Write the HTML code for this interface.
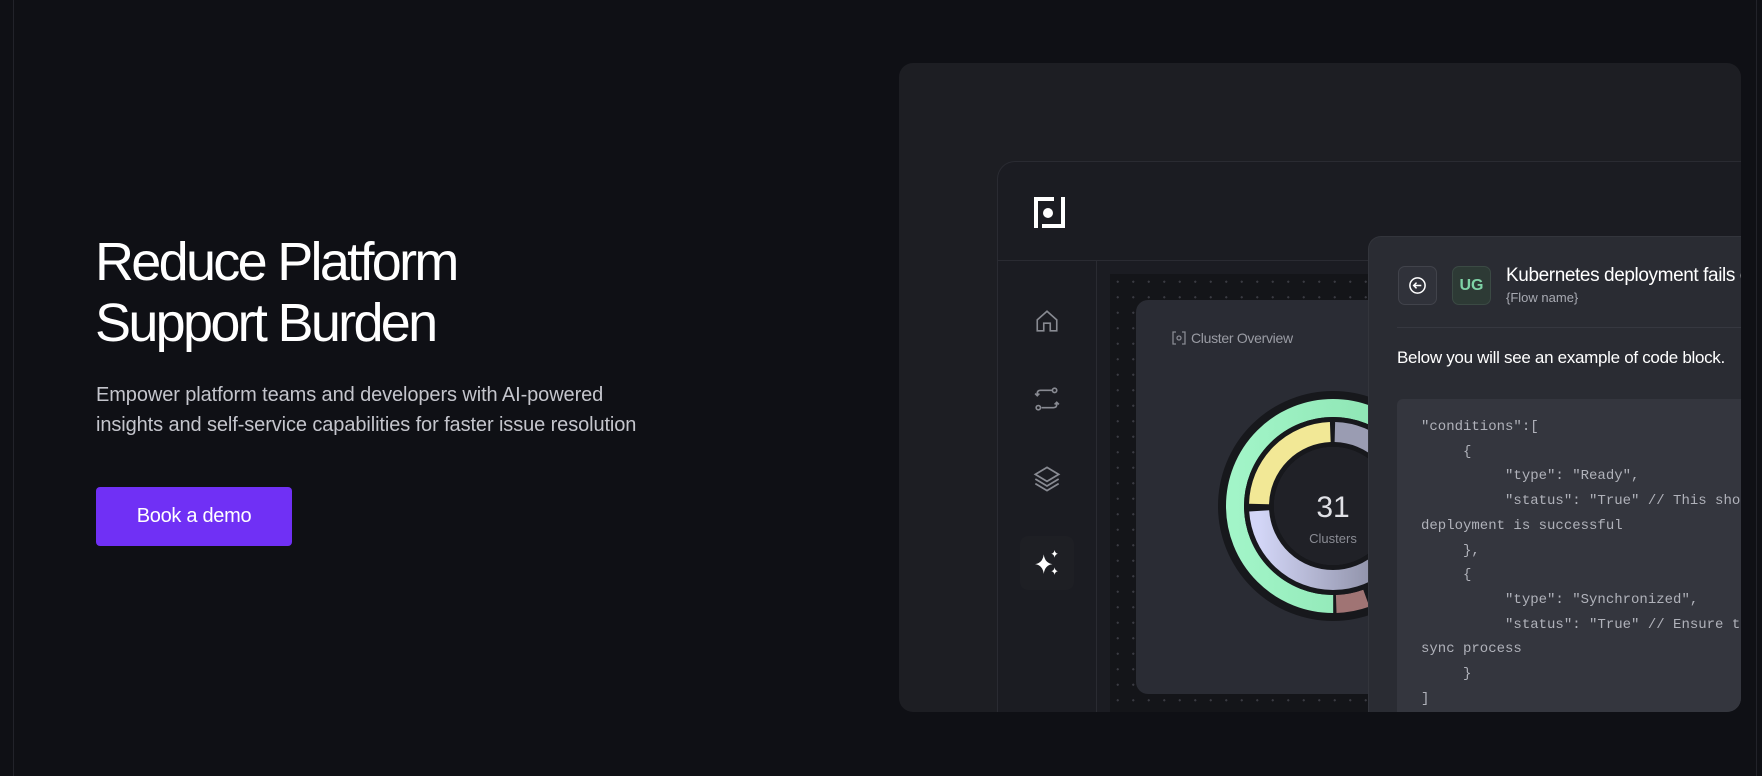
<!DOCTYPE html>
<html><head><meta charset="utf-8"><style>
*{margin:0;padding:0;box-sizing:border-box}
html,body{width:1762px;height:776px;overflow:hidden}
body{background:#0f1015;position:relative;font-family:"Liberation Sans",sans-serif}
.vl{position:absolute;top:0;bottom:0;width:1px;background:#22232a}
h1{position:absolute;left:95px;top:232px;font-size:54px;font-weight:normal;line-height:61px;color:#fff;letter-spacing:-2.7px}
.p{position:absolute;left:96px;top:380px;font-size:20px;line-height:30px;color:#c4c5cc;letter-spacing:-0.1px;white-space:nowrap}
.btn{position:absolute;left:96px;top:487px;width:196px;height:59px;background:#7030f5;border-radius:4px;color:#fff;font-size:20px;line-height:59px;text-align:center;letter-spacing:-0.3px}
.card{position:absolute;left:899px;top:63px;width:842px;height:649px;background:#1d1e23;border-radius:14px;overflow:hidden}
.app{position:absolute;left:98px;top:98px;width:900px;height:551px;background:#1b1c22;border:1px solid #2a2b32;border-bottom:none;border-radius:18px 18px 0 0;overflow:hidden}
.hdiv{position:absolute;left:0;right:0;top:98px;height:1px;background:#2a2b32}
.vdiv{position:absolute;left:98px;top:98px;bottom:0;width:1px;background:#2a2b32}
.dots{position:absolute;left:112px;top:112px;width:700px;height:440px;background-image:radial-gradient(#3a3b42 1px,transparent 1.2px);background-size:15.5px 15.5px;background-color:#141519}
.cl{position:absolute;left:138px;top:138px;width:300px;height:394px;background:#2a2c34;border-radius:12px}
.chat{position:absolute;left:370px;top:74px;width:500px;height:477px;background:#2a2c33;border-radius:13px 13px 0 0;border:1px solid #33353c;border-bottom:none;overflow:hidden}
.code{font-family:"Liberation Mono",monospace;font-size:14px;line-height:24.7px;color:#b0b2ba;white-space:pre;position:absolute;left:28px;top:162px;width:400px;height:315px;overflow:hidden;background:#34363e;border-radius:6px 6px 0 0;padding:16px 0 0 24px}
</style></head><body>
<div class="vl" style="left:13px"></div><div class="vl" style="left:1756px"></div>
<h1>Reduce Platform<br>Support Burden</h1>
<div class="p">Empower platform teams and developers with AI-powered<br>insights and self-service capabilities for faster issue resolution</div>
<div class="btn">Book a demo</div>
<div class="card">
 <div class="app">
  <svg style="position:absolute;left:36px;top:35px" width="31" height="31" viewBox="0 0 31 31"><path d="M0 0H20V4H4V31H0Z M27 0H31V31H8V27H27Z" fill="#fff"/><circle cx="14" cy="16" r="5" fill="#fff"/></svg>
  <div class="hdiv"></div><div class="vdiv"></div>
  <div class="dots"></div>
  <svg style="position:absolute;left:36px;top:146px" width="26" height="26" viewBox="0 0 24 24" fill="none" stroke="#888a92" stroke-width="1.5"><path d="M3 11L12 3L21 11V21H15V14H9V21H3Z"/></svg>
  <svg style="position:absolute;left:36px;top:224px" width="26" height="26" viewBox="0 0 24 24" fill="none" stroke="#888a92" stroke-width="1.5"><circle cx="19" cy="4" r="2"/><circle cx="4" cy="20" r="2"/><path d="M17 4H6Q3 4 3 7V9M1 7L3 9L5 7M7 20H18Q21 20 21 17V15M19 17L21 15L23 17"/></svg>
  <svg style="position:absolute;left:35px;top:303px" width="28" height="28" viewBox="0 0 24 24" fill="none" stroke="#888a92" stroke-width="1.5"><path d="M12 2L22 8L12 14L2 8Z M2 12L12 18L22 12 M2 16L12 22L22 16"/></svg>
  <div style="position:absolute;left:22px;top:374px;width:54px;height:54px;background:#1e1f24;border-radius:8px"></div>
  <svg style="position:absolute;left:36px;top:388px" width="26" height="26" viewBox="0 0 24 24" fill="#fff"><path d="M9 4Q10 12 17 13Q10 14 9 22Q8 14 1 13Q8 12 9 4Z M19 0Q19.5 3 22 3.5Q19.5 4 19 7Q18.5 4 16 3.5Q18.5 3 19 0Z M19 16Q19.5 19 22 19.5Q19.5 20 19 23Q18.5 20 16 19.5Q18.5 19 19 16Z"/></svg>
  <div class="cl">
   <svg style="position:absolute;left:36px;top:31px" width="14" height="14" viewBox="0 0 14 14" fill="none" stroke="#888a92" stroke-width="1.3"><path d="M4 1H1V13H4M10 1H13V13H10"/><circle cx="7" cy="7" r="2"/></svg>
   <div style="position:absolute;left:55px;top:30px;color:#9a9ca4;font-size:14px;letter-spacing:-0.3px">Cluster Overview</div>
   <svg style="position:absolute;left:0;top:0" width="300" height="394">
    <defs><linearGradient id="g" x1="0" y1="0" x2="1" y2="0"><stop offset="0" stop-color="#a2f5c8"/><stop offset="0.7" stop-color="#8fe6b5"/><stop offset="1" stop-color="#5c9479"/></linearGradient>
    <linearGradient id="lv" x1="0" y1="0" x2="1" y2="0"><stop offset="0" stop-color="#d3d6f7"/><stop offset="1" stop-color="#7c7e92"/></linearGradient></defs>
    <circle cx="197" cy="206" r="100" fill="none" stroke="#17181c" stroke-width="30"/>
    <circle cx="197" cy="206" r="98" fill="none" stroke="url(#g)" stroke-width="18" pathLength="100" stroke-dasharray="75 25" stroke-dashoffset="-25"/>
    <circle cx="197" cy="206" r="98" fill="none" stroke="#a07474" stroke-width="18" pathLength="100" stroke-dasharray="5 95" stroke-dashoffset="-19.5"/>
    <circle cx="197" cy="206" r="74" fill="none" stroke="#17181c" stroke-width="30"/>
    <circle cx="197" cy="206" r="74" fill="none" stroke="#f2e896" stroke-width="20" pathLength="100" stroke-dasharray="24 76" stroke-dashoffset="-50.5"/>
    <circle cx="197" cy="206" r="74" fill="none" stroke="url(#lv)" stroke-width="20" pathLength="100" stroke-dasharray="49 51" stroke-dashoffset="0"/>
    <circle cx="197" cy="206" r="74" fill="none" stroke="#9a9cb2" stroke-width="20" pathLength="100" stroke-dasharray="24 76" stroke-dashoffset="-75.5"/>
    <circle cx="197" cy="206" r="59" fill="#202127"/>
    <text x="197" y="217" fill="#e0e1e6" font-size="30" text-anchor="middle" font-family="Liberation Sans">31</text>
    <text x="197" y="243" fill="#8a8c94" font-size="13" text-anchor="middle" font-family="Liberation Sans">Clusters</text>
   </svg>
  </div>
  <div class="chat">
   <div style="position:absolute;left:29px;top:29px;width:39px;height:39px;border:1px solid #41434b;background:#30323a;border-radius:7px"></div>
   <svg style="position:absolute;left:39px;top:39px" width="19" height="19" viewBox="0 0 20 20" fill="none" stroke="#fff" stroke-width="1.6"><circle cx="10" cy="10" r="8"/><path d="M14 10H6M9 7L6 10L9 13"/></svg>
   <div style="position:absolute;left:83px;top:29px;width:39px;height:39px;border:1px solid #3b4a44;background:#2d3a35;border-radius:7px;color:#7fd3a6;font-weight:bold;font-size:16px;line-height:37px;text-align:center">UG</div>
   <div style="position:absolute;left:137px;top:28px;color:#fff;font-size:19px;white-space:nowrap;letter-spacing:-0.4px">Kubernetes deployment fails on</div>
   <div style="position:absolute;left:137px;top:53px;color:#a8aab2;font-size:13px">{Flow name}</div>
   <div style="position:absolute;left:28px;top:90px;width:480px;height:1px;background:#363840"></div>
   <div style="position:absolute;left:28px;top:111px;color:#fff;font-size:17px;white-space:nowrap;letter-spacing:-0.3px">Below you will see an example of code block.</div>
   <div class="code">"conditions":[
     {
          "type": "Ready",
          "status": "True" // This should
deployment is successful
     },
     {
          "type": "Synchronized",
          "status": "True" // Ensure this
sync process
     }
]</div>
  </div>
 </div>
</div>
</body></html>
